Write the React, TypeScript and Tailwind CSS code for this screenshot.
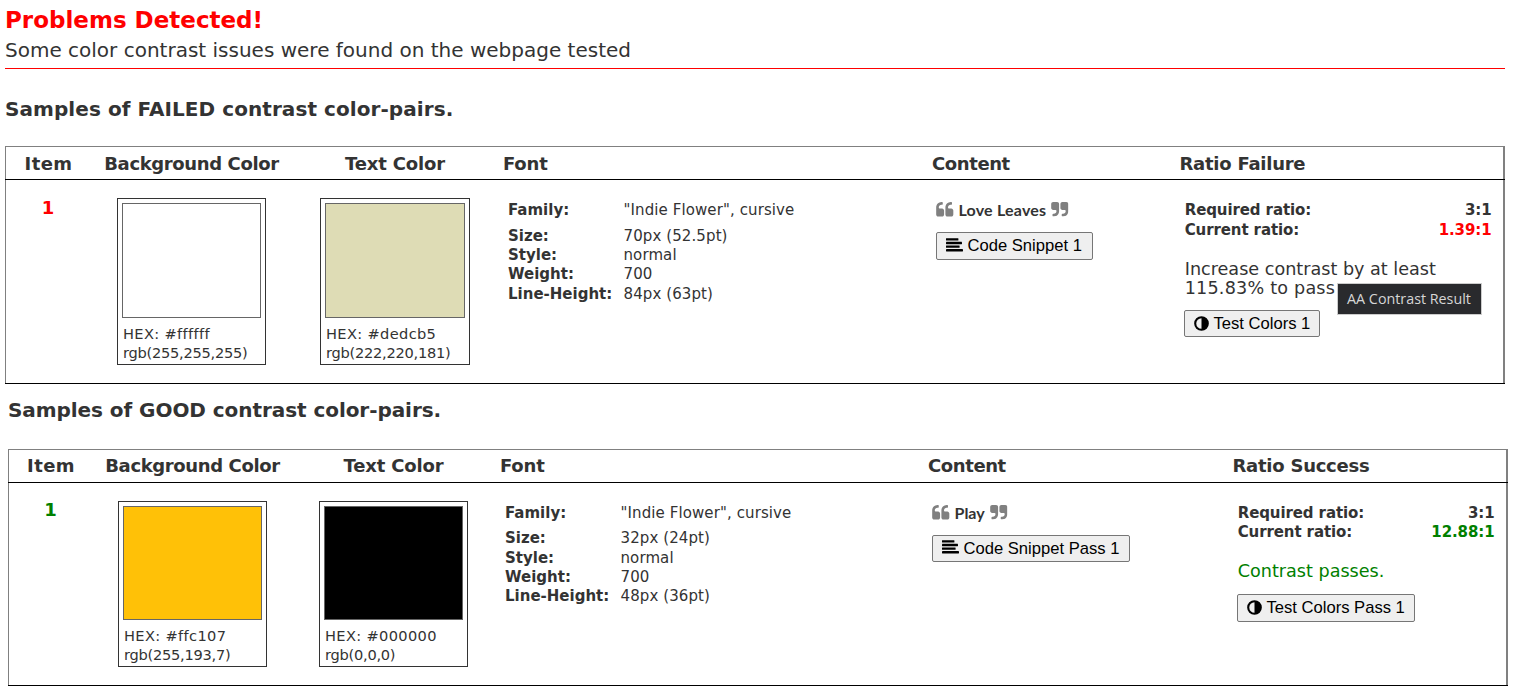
import type { ReactNode } from "react";

function Quote({ right = false }: { right?: boolean }) {
  return (
    <svg
      viewBox="64 128 1664 1408"
      className={right ? "h-[14.5px] w-[17.5px] shrink-0 rotate-180 fill-[#808080]" : "h-[14.5px] w-[17.5px] shrink-0 fill-[#808080]"}
    >
      <path d="M832 960v384q0 80-56 136t-136 56h-384q-80 0-136-56t-56-136v-704q0-104 40.5-198.5t109.5-163.5 163.5-109.5 198.5-40.5h64q26 0 45 19t19 45v128q0 26-19 45t-45 19h-64q-106 0-181 75t-75 181v32q0 40 28 68t68 28h224q80 0 136 56t56 136zm896 0v384q0 80-56 136t-136 56h-384q-80 0-136-56t-56-136v-704q0-104 40.5-198.5t109.5-163.5 163.5-109.5 198.5-40.5h64q26 0 45 19t19 45v128q0 26-19 45t-45 19h-64q-106 0-181 75t-75 181v32q0 40 28 68t68 28h224q80 0 136 56t56 136z" />
    </svg>
  );
}

function AlignIcon() {
  return (
    <svg viewBox="0 0 17 14" className="mb-[3px] h-[14px] w-[17px] shrink-0 fill-black">
      <rect x="0" y="0.2" width="12.4" height="2.4" rx="0.4" />
      <rect x="0" y="3.8" width="16" height="2.4" rx="0.4" />
      <rect x="0" y="7.4" width="13.6" height="2.4" rx="0.4" />
      <rect x="0" y="11" width="17" height="2.4" rx="0.4" />
    </svg>
  );
}

function ContrastIcon() {
  return (
    <svg viewBox="0 0 15 15" className="mb-px size-[15px] shrink-0">
      <circle cx="7.5" cy="7.5" r="6.3" fill="none" stroke="#000" strokeWidth="2.1" />
      <path d="M7.5 1.5a6 6 0 0 1 0 12z" fill="#000" />
    </svg>
  );
}

function Btn({ icon, className, children }: { icon: ReactNode; className: string; children: ReactNode }) {
  return (
    <button
      className={`flex items-center gap-[4.5px] whitespace-nowrap rounded-[2px] border border-[#767676] bg-[#efefef] pl-[9px] font-['Liberation_Sans',Arial,sans-serif] text-[16.6px] leading-none text-black ${className}`}
    >
      {icon}
      <span className="pt-[1.4px]">{children}</span>
    </button>
  );
}

function Swatch({ box, fill, hex, rgb }: { box: string; fill: string; hex: string; rgb: string }) {
  return (
    <div className={`border border-[#333] p-1 ${box}`}>
      <div className={`border border-[#666] ${fill}`} />
      <div className="pl-px pt-[6px] text-[14.6px] leading-[19.4px]">
        <div className="tracking-[0.35px]">{hex}</div>
        <div className="-tracking-[0.25px]">{rgb}</div>
      </div>
    </div>
  );
}

type Sample = {
  cols: string;
  headPad: string;
  bodyHeight: string;
  tone: string;
  itemPad: string;
  ratioTitle: string;
  swatches: ReactNode;
  font: [string, string][];
  fontGap: string;
  content: ReactNode;
  snippet: ReactNode;
  ratio: string;
  ratioLeading: string;
  result: ReactNode;
};

function SampleTable(s: Sample) {
  return (
    <div className="w-[1500px]">
      <div
        className={`grid h-[33px] border-l border-r-2 border-t border-[#808080] text-[18px] font-bold leading-5 ${s.headPad} ${s.cols}`}
      >
        <div className="pl-px text-center tracking-[0.4px]">Item</div>
        <div className="text-center -tracking-[0.37px]">Background Color</div>
        <div className="text-center -tracking-[0.15px]">Text Color</div>
        <div className="pl-[6px] -tracking-[0.2px]">Font</div>
        <div className="pl-[6px] -tracking-[0.4px]">Content</div>
        <div className="pl-[4.5px] -tracking-[0.25px]">{s.ratioTitle}</div>
      </div>
      <div className="h-px bg-black" />
      <div className={`grid border-l border-r-2 border-[#808080] ${s.bodyHeight} ${s.cols}`}>
        <div className={`text-center text-[18px] font-bold leading-5 ${s.itemPad} ${s.tone}`}>1</div>
        {s.swatches}
        <div className="pl-[11px] pt-[21px] text-[15px] leading-[19.3px]">
          {s.font.map(([label, value], i) => (
            <div key={label} className={i === 0 ? `flex ${s.fontGap}` : "flex"}>
              <div className="w-[115.5px] font-bold">{label}</div>
              <div className="whitespace-nowrap tracking-[0.1px]">{value}</div>
            </div>
          ))}
        </div>
        <div className="pl-[10px] pt-[22px]">
          <div className="flex h-[15px] items-center gap-[5px] whitespace-nowrap font-[Lato,sans-serif] text-[16px] font-bold leading-[15px]">
            <Quote />
            {s.content}
            <Quote right />
          </div>
          {s.snippet}
        </div>
        <div className="relative pl-[9px] pr-[11.5px] pt-[21px]">
          <div className={`h-[39px] pl-[0.7px] text-[15px] font-bold -tracking-[0.1px] ${s.ratioLeading}`}>
            <div className="flex justify-between">
              <span>Required ratio:</span>
              <span>3:1</span>
            </div>
            <div className="flex justify-between">
              <span>Current ratio:</span>
              <span className={s.tone}>{s.ratio}</span>
            </div>
          </div>
          {s.result}
        </div>
      </div>
      <div className="h-px bg-black" />
    </div>
  );
}

export default function App() {
  return (
    <div className="h-[696px] w-[1516px] overflow-hidden bg-white font-['DejaVu_Sans',Verdana,sans-serif] text-[#333]">
      <header className="ml-[5px] h-[69px] w-[1500px] border-b border-[#f00] pt-[7px]">
        <h1 className="text-[23px] font-bold leading-[27px] text-[#f00]">Problems Detected!</h1>
        <p className="pt-[4px] text-[20px] leading-6">Some color contrast issues were found on the webpage tested</p>
      </header>
      <section className="ml-[5px]">
        <h2 className="h-[77px] pt-[28px] text-[20px] font-bold leading-6 tracking-[0.07px]">
          Samples of FAILED contrast color-pairs.
        </h2>
        <SampleTable
          cols="grid-cols-[84px_203px_204px_429px_249px_328px]"
          headPad="pt-[7px]"
          bodyHeight="h-[203px]"
          tone="text-[#f00]"
          itemPad="pt-[18px]"
          ratioTitle="Ratio Failure"
          swatches={
            <>
              <div className="flex justify-center pt-[18px]">
                <Swatch box="h-[167px] w-[149px]" fill="h-[115px] bg-white" hex="HEX: #ffffff" rgb="rgb(255,255,255)" />
              </div>
              <div className="flex justify-center pt-[18px]">
                <Swatch box="h-[167px] w-[150px]" fill="h-[115px] bg-[#dedcb5]" hex="HEX: #dedcb5" rgb="rgb(222,220,181)" />
              </div>
            </>
          }
          font={[
            ["Family:", '"Indie Flower", cursive'],
            ["Size:", "70px (52.5pt)"],
            ["Style:", "normal"],
            ["Weight:", "700"],
            ["Line-Height:", "84px (63pt)"],
          ]}
          fontGap="mb-[6.5px]"
          content={<span className="tracking-[0.2px]">Love Leaves</span>}
          snippet={
            <Btn icon={<AlignIcon />} className="mt-[15px] h-7 w-[157px]">
              Code Snippet 1
            </Btn>
          }
          ratio="1.39:1"
          ratioLeading="leading-[19.5px]"
          result={
            <>
              <div className="whitespace-nowrap pl-[0.7px] pt-5 text-[17.6px] leading-[19.4px]">
                Increase contrast by at least
                <br />
                <span className="tracking-[0.2px]">115.83% to pass</span>
              </div>
              <Btn icon={<ContrastIcon />} className="mt-[11.2px] h-[27px] w-[136px]">
                Test Colors 1
              </Btn>
              <div className="absolute left-[162px] top-[103px] flex h-8 w-[145px] items-center justify-center whitespace-nowrap border border-[#ccc] bg-[#292a2d] pr-px font-['Open_Sans',sans-serif] text-[14.3px] text-[#d6d6d6]">
                AA Contrast Result
              </div>
            </>
          }
        />
      </section>
      <section className="ml-2">
        <h2 className="h-[65px] pt-[14px] text-[20px] font-bold leading-6 -tracking-[0.06px]">
          Samples of GOOD contrast color-pairs.
        </h2>
        <SampleTable
          cols="grid-cols-[83px_201px_201px_428px_306px_278px]"
          headPad="pt-[6px]"
          bodyHeight="h-[202px]"
          tone="text-[#008000]"
          itemPad="pt-[17px]"
          ratioTitle="Ratio Success"
          swatches={
            <>
              <div className="flex justify-center pt-[18px]">
                <Swatch box="h-[166px] w-[149px]" fill="h-[114px] bg-[#ffc107]" hex="HEX: #ffc107" rgb="rgb(255,193,7)" />
              </div>
              <div className="flex justify-center pt-[18px]">
                <Swatch box="h-[166px] w-[149px]" fill="h-[114px] bg-black" hex="HEX: #000000" rgb="rgb(0,0,0)" />
              </div>
            </>
          }
          font={[
            ["Family:", '"Indie Flower", cursive'],
            ["Size:", "32px (24pt)"],
            ["Style:", "normal"],
            ["Weight:", "700"],
            ["Line-Height:", "48px (36pt)"],
          ]}
          fontGap="mb-[6px]"
          content="Play"
          snippet={
            <Btn icon={<AlignIcon />} className="mt-[15px] h-[27px] w-[198px]">
              Code Snippet Pass 1
            </Btn>
          }
          ratio="12.88:1"
          ratioLeading="leading-[19.4px]"
          result={
            <>
              <div className="pl-[0.7px] pt-[19.2px] text-[17.6px] leading-[19.4px] text-[#008000]">Contrast passes.</div>
              <Btn icon={<ContrastIcon />} className="mt-[12px] h-7 w-[178px]">
                Test Colors Pass 1
              </Btn>
            </>
          }
        />
      </section>
    </div>
  );
}
